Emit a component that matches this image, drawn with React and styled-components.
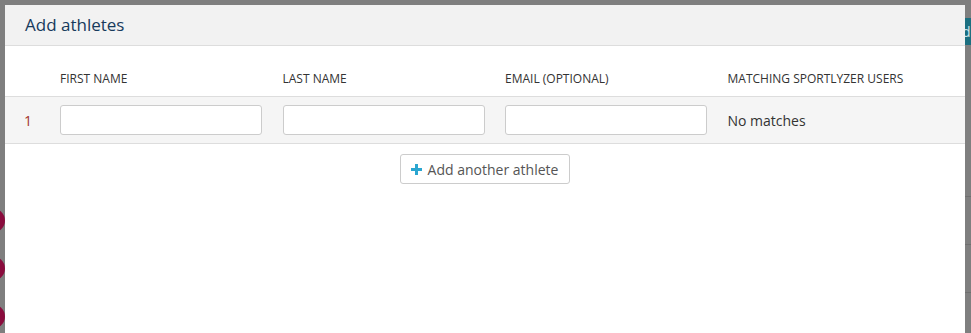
import React from "react";
import styled, { createGlobalStyle } from "styled-components";

const Global = createGlobalStyle`
  html, body { margin: 0; padding: 0; }
  body {
    width: 971px;
    height: 333px;
    overflow: hidden;
    background: #7f7f7f;
    font-family: "Open Sans", "Liberation Sans", sans-serif;
  }
`;

const Page = styled.div`
  position: relative;
  width: 971px;
  height: 333px;
  display: flex;
  justify-content: space-between;
  background: #7f7f7f;
  overflow: hidden;
`;

const LeftStrip = styled.div`
  width: 5px;
  display: flex;
  flex-direction: column;
  padding-top: 208px;
  gap: 23px;
`;

const Dot = styled.div`
  width: 26px;
  height: 25px;
  border-radius: 50%;
  background: #8a0c3d;
  margin-left: -21px;
  flex: none;
`;

const RightStrip = styled.div`
  width: 6px;
  display: flex;
  flex-direction: column;
  padding-top: 18px;
`;

const TealBtn = styled.div`
  height: 27px;
  background: #1b6f80;
  color: #cfe3e8;
  font-size: 14px;
  line-height: 27px;
  overflow: hidden;
  text-indent: -3px;
`;

const Faint = styled.div`
  height: 1px;
  background: #6f6f6f;
  margin-top: ${(p) => p.$mt}px;
`;

const Modal = styled.div`
  position: absolute;
  left: 5px;
  top: 5px;
  width: 960px;
  bottom: -20px;
  background: #ffffff;
  display: flex;
  flex-direction: column;
`;

const Header = styled.div`
  height: 40px;
  background: #f2f2f2;
  border-bottom: 1px solid #dddddd;
  display: flex;
  align-items: center;
  padding-left: 20px;
`;

const Title = styled.h3`
  margin: 0;
  font-size: 17px;
  font-weight: 400;
  color: #173a5c;
  line-height: 1;
  padding-bottom: 1px;
`;

const Grid = styled.div`
  display: grid;
  grid-template-columns: 55px repeat(4, 222.5px);
  padding-right: 20px;
  align-items: center;
`;

const HeadRow = styled(Grid)`
  height: 50px;
  border-bottom: 1px solid #dddddd;
  align-items: end;
`;

const Label = styled.div`
  font-size: 12px;
  color: #333333;
  padding-bottom: 9px;
  white-space: nowrap;
`;

const Row = styled(Grid)`
  height: 46px;
  background: #f5f5f5;
  border-bottom: 1px solid #dddddd;
`;

const Num = styled.div`
  padding-left: 19px;
  font-size: 14px;
  color: #a3362a;
`;

const Input = styled.input`
  box-sizing: border-box;
  width: 202px;
  height: 30px;
  border: 1px solid #cccccc;
  border-radius: 3px;
  background: #ffffff;
  font-family: inherit;
  font-size: 14px;
  padding: 4px 8px;
  margin: 0;
  outline: none;
`;

const Matches = styled.div`
  font-size: 14px;
  color: #333333;
`;

const Actions = styled.div`
  display: flex;
  justify-content: center;
  padding-top: 10px;
`;

const AddButton = styled.button`
  display: flex;
  align-items: center;
  gap: 6px;
  height: 30px;
  padding: 0 11px 0 10px;
  background: #ffffff;
  border: 1px solid #cccccc;
  border-radius: 3px;
  font-family: inherit;
  font-size: 14px;
  color: #555555;
  cursor: pointer;
`;

const Plus = () => (
  <svg width="11" height="11" viewBox="0 0 11 11">
    <rect x="4" y="0" width="3" height="11" fill="#2ba6d0" />
    <rect x="0" y="4" width="11" height="3" fill="#2ba6d0" />
  </svg>
);

export default function App() {
  return (
    <>
      <Global />
      <Page>
        <LeftStrip>
          <Dot />
          <Dot />
          <Dot />
        </LeftStrip>
        <RightStrip>
          <TealBtn>d</TealBtn>
          <Faint $mt={151} />
          <Faint $mt={47} />
          <Faint $mt={47} />
        </RightStrip>
        <Modal>
          <Header>
            <Title>Add athletes</Title>
          </Header>
          <HeadRow>
            <div />
            <Label>FIRST NAME</Label>
            <Label>LAST NAME</Label>
            <Label>EMAIL (OPTIONAL)</Label>
            <Label>MATCHING SPORTLYZER USERS</Label>
          </HeadRow>
          <Row>
            <Num>1</Num>
            <Input />
            <Input />
            <Input />
            <Matches>No matches</Matches>
          </Row>
          <Actions>
            <AddButton>
              <Plus />
              Add another athlete
            </AddButton>
          </Actions>
        </Modal>
      </Page>
    </>
  );
}
